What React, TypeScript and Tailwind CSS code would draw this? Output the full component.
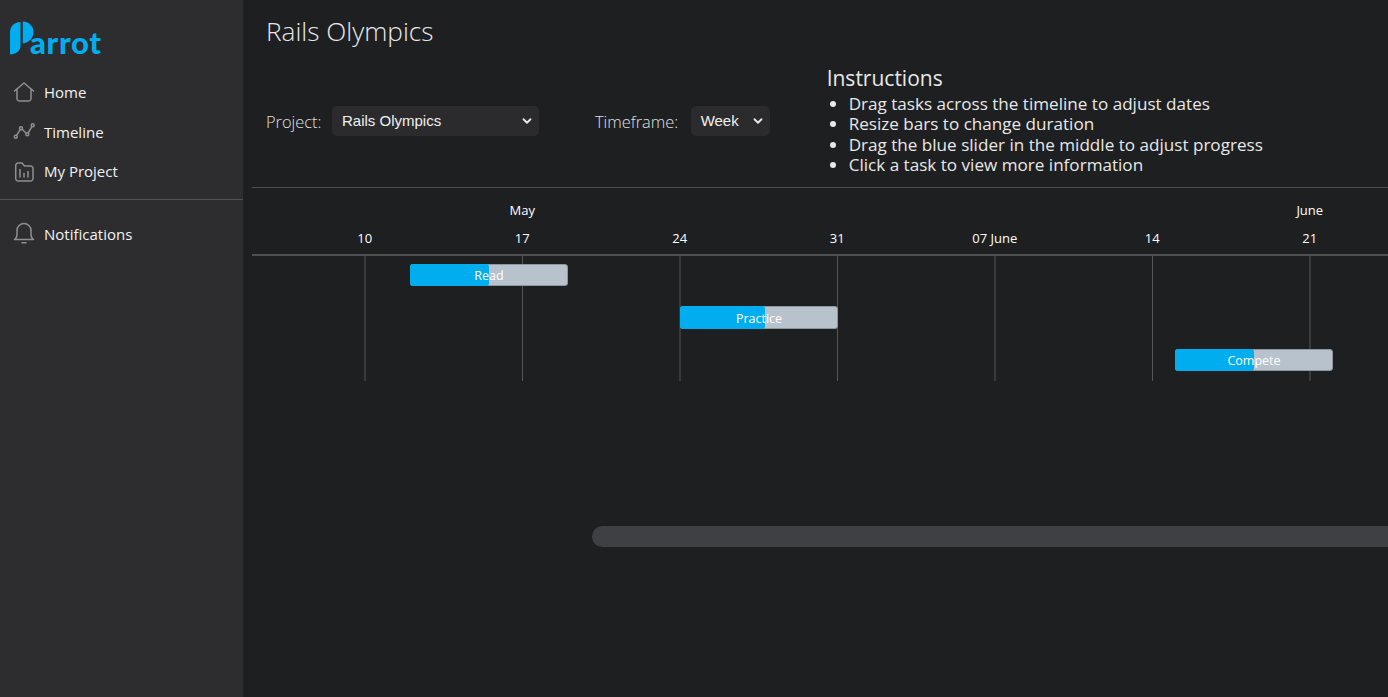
import React from 'react';
import { ChevronDown } from 'lucide-react';

const HomeIcon = () => (
  <svg width="24" height="24" viewBox="0 0 24 24" fill="none" stroke="#8f8f91" strokeWidth="1.5" strokeLinejoin="round" strokeLinecap="round">
    <path d="M2.500 11 12 3l9.500 8" />
    <path d="M5 9.500V18.500A2.500 2.500 0 0 0 7.500 21h9a2.500 2.500 0 0 0 2.500-2.500V9.500" />
  </svg>
);

const TimelineIcon = () => (
  <svg width="24" height="24" viewBox="0 0 24 24" fill="none" stroke="#8f8f91" strokeWidth="1.5">
    <circle cx="3.700" cy="16.700" r="1.500" />
    <circle cx="9" cy="8.300" r="1.500" />
    <circle cx="15.300" cy="14.300" r="1.500" />
    <circle cx="20.700" cy="5.300" r="1.500" />
    <path d="M4.500 15.400 8.200 9.600M10.100 9.300l4.100 4M16.100 13l3.800-6.400" />
  </svg>
);

const FolderIcon = () => (
  <svg width="24" height="24" viewBox="0 0 24 24" fill="none" stroke="#8f8f91" strokeWidth="1.5" strokeLinejoin="round" strokeLinecap="round">
    <path d="M3.700 5.500A2.500 2.500 0 0 1 6.200 3H10l2.500 3h6a2.500 2.500 0 0 1 2.500 2.500v10a2.500 2.500 0 0 1-2.500 2.500H6.200a2.500 2.500 0 0 1-2.500-2.500Z" />
    <path d="M8 9.500V17M12 13.500V17M16 11.500V17" />
  </svg>
);

const BellIcon = () => (
  <svg width="24" height="24" viewBox="0 0 24 24" fill="none" stroke="#8f8f91" strokeWidth="1.5" strokeLinejoin="round" strokeLinecap="round">
    <path d="M2.500 17.500h19c-1.500-1-2.500-2.500-2.500-5V8.500a7 7 0 0 0-14 0v4c0 2.500-1 4-2.500 5z" />
    <path d="M10 20.800h4" />
  </svg>
);

const ParrotLogo = () => (
  <div className="flex items-end h-[36px] pl-[10px]">
    <svg width="24" height="34" viewBox="0 0 24 34" fill="#00aeef" className="shrink-0">
      <path d="M0 33.500V12C0 5 4 1.500 10.500 1V25C10.500 30 6 33 0 33.500Z" />
      <path d="M12.800 0.500C19.500 1 23.500 5.500 23.500 11C23.500 17 19 21.500 12.800 22.500Z" />
    </svg>
    <span className="-ml-[4px] text-[31px] leading-[26px] font-black tracking-[0.7px] text-[#00aeef] font-['Lato',sans-serif]">arrot</span>
  </div>
);

const navItems = [
  { label: 'Home', icon: HomeIcon, height: 'h-[40px]' },
  { label: 'Timeline', icon: TimelineIcon, height: 'h-[40px]' },
  { label: 'My Project', icon: FolderIcon, height: 'h-[39px]' },
];

const NavRow = ({ label, icon: Icon, className }: { label: string; icon: React.FC; className: string }) => (
  <div className={`flex items-center gap-[8px] pl-[12px] ${className}`}>
    <Icon />
    <span className="text-[15px] text-[#f2f2f2]">{label}</span>
  </div>
);

const Sidebar = () => (
  <aside className="w-[243px] shrink-0 bg-[#2d2d2f] pt-[19px]">
    <ParrotLogo />
    <nav className="mt-[17px]">
      {navItems.map((item) => (
        <NavRow key={item.label} label={item.label} icon={item.icon} className={item.height} />
      ))}
    </nav>
    <div className="mt-[8px] border-t border-[#525254]" />
    <NavRow label="Notifications" icon={BellIcon} className="mt-[14px] h-[40px]" />
  </aside>
);

const FakeSelect = ({ value, className }: { value: string; className: string }) => (
  <div className={`flex items-center justify-between h-[30px] rounded-[5px] bg-[#2b2b2d] pl-[10px] pr-[5px] text-[15px] text-[#f0f0f0] font-['Liberation_Sans',sans-serif] ${className}`}>
    <span className="pt-[1px]">{value}</span>
    <ChevronDown size={14} strokeWidth={3.200} className="text-[#e6e6e6]" />
  </div>
);

const instructions = [
  'Drag tasks across the timeline to adjust dates',
  'Resize bars to change duration',
  'Drag the blue slider in the middle to adjust progress',
  'Click a task to view more information',
];

const dates = ['10', '17', '24', '31', '07 June', '14', '21'];
const months: Record<string, string> = { '17': 'May', '21': 'June' };
const gridLines = [113, 270.5, 428, 585.5, 743, 900.5, 1058];

const tasks = [
  { name: 'Read', offset: 'ml-[158px]', progress: 'w-[50.600%]' },
  { name: 'Practice', offset: 'ml-[428px]', progress: 'w-[54.600%]' },
  { name: 'Compete', offset: 'ml-[923px]', progress: 'w-[50.600%]' },
];

const Gantt = () => (
  <div className="border-t border-[#4d4d4f] h-[200px] overflow-hidden">
    <div className="pl-[34px] grid grid-cols-[repeat(7,157.500px)] text-[13px] text-white text-center font-['Open_Sans',sans-serif]">
      {dates.map((d) => (
        <div key={d} className="h-[66px] pt-[13px] flex flex-col">
          <span className="h-[28px]">{months[d] ?? ''}</span>
          <span>{d}</span>
        </div>
      ))}
    </div>
    <div className="h-[1.500px] bg-[#4f4f51]" />
    <div className="relative h-[125px] w-[1136px] pt-[8px] flex flex-col gap-[20px]">
      <svg className="absolute left-0 top-0" width="1136" height="125">
        {gridLines.map((x) => (
          <line key={x} x1={x} x2={x} y1="0" y2="125" stroke="#55565a" strokeWidth="1" />
        ))}
      </svg>
      {tasks.map((t) => (
        <div key={t.name} className={`relative h-[22.500px] w-[158px] shrink-0 rounded-[3px] border border-[#8d97a1] bg-[#b8c2cc] ${t.offset}`}>
          <div className={`absolute -left-[1px] -top-[1px] -bottom-[1px] rounded-[3px] bg-[#00aeef] ${t.progress}`} />
          <span className="absolute inset-0 flex items-center justify-center pt-[4px] text-[12.500px] text-white font-['Open_Sans',sans-serif]">{t.name}</span>
        </div>
      ))}
    </div>
  </div>
);

export default function App() {
  return (
    <div className="flex h-[697px] w-full overflow-hidden bg-[#1e1f21] font-['Open_Sans',sans-serif]">
      <Sidebar />
      <main className="flex-1 min-w-0 pl-[9px]">
        <h1 className="pl-[14px] pt-[12px] text-[26.200px] leading-[38px] font-light text-[#e8e8e8]">Rails Olympics</h1>
        <div className="flex items-center h-[137px] pl-[14px] pt-[4px]">
          <span className="mt-[3px] mr-[10.500px] text-[16.400px] font-light text-[#e0e0e0]">Project:</span>
          <FakeSelect value="Rails Olympics" className="w-[207px]" />
          <span className="mt-[3px] ml-[56px] mr-[12.500px] text-[16.400px] font-light text-[#e0e0e0]">Timeframe:</span>
          <FakeSelect value="Week" className="w-[79px]" />
          <div className="ml-[57px] self-start pt-[9px]">
            <h2 className="text-[21px] leading-[31px] text-[#e8e8e8]">Instructions</h2>
            <ul className="list-disc pl-[22px] text-[17.100px] leading-[20.300px] text-[#e8e8e8]">
              {instructions.map((i) => (
                <li key={i}>{i}</li>
              ))}
            </ul>
          </div>
        </div>
        <Gantt />
        <div className="ml-[340px] mt-[139px] h-[21px] rounded-l-full bg-[#3f4043]" />
      </main>
    </div>
  );
}
